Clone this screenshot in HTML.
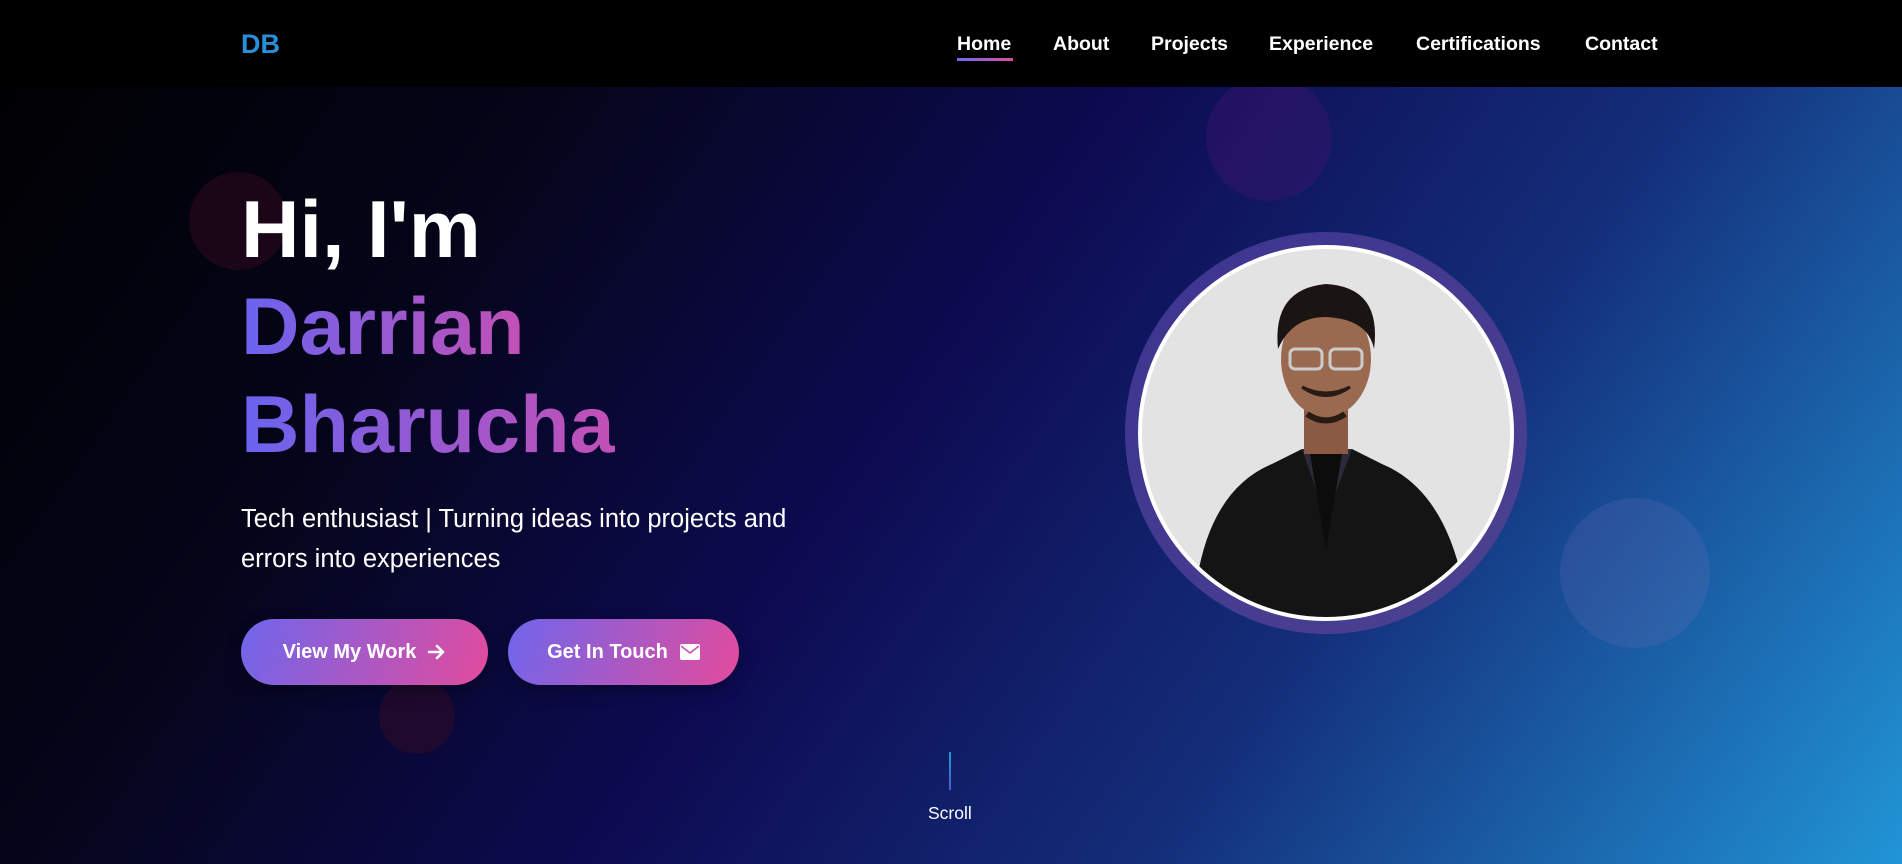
<!DOCTYPE html>
<html><head><meta charset="utf-8"><style>
*{margin:0;padding:0;box-sizing:border-box}
body{width:1902px;height:864px;overflow:hidden;font-family:"Liberation Sans",sans-serif;color:#fff;position:relative;
background:linear-gradient(125deg,#000 0%,#05051a 25%,#0d0b52 48%,#142e7a 70%,#2195d6 100%);}
nav{position:absolute;left:0;top:0;width:1902px;height:87px;background:#000}
.logo{position:absolute;left:241px;top:29px;font-size:27px;font-weight:bold;color:#2a8fd9}
.links a{position:absolute;top:33px;font-size:19.5px;font-weight:bold;color:#fff;text-decoration:none}
.ul{position:absolute;left:957px;top:58px;width:56px;height:3px;background:linear-gradient(90deg,#6d6af0,#e04b9c)}
.b{position:absolute;border-radius:50%}
h1{position:absolute;left:241px;font-size:81px;font-weight:bold;line-height:1}
.g{background:linear-gradient(90deg,#6a63ef,#c350b5);-webkit-background-clip:text;background-clip:text;color:transparent}
.sub{position:absolute;left:241px;top:499px;font-size:25.5px;line-height:40px;width:600px}
.btn{position:absolute;top:619px;height:66px;border-radius:33px;background:linear-gradient(110deg,#6f66ec,#e34b9c);font-size:20px;font-weight:bold;display:flex;align-items:center;justify-content:center;gap:12px;box-shadow:0 6px 16px rgba(0,0,0,.3)}
</style></head><body>
<div class="b" style="left:1206px;top:75px;width:126px;height:126px;background:rgba(60,20,110,.45)"></div>
<div class="b" style="left:189px;top:172px;width:98px;height:98px;background:rgba(50,10,30,.5)"></div>
<div class="b" style="left:379px;top:678px;width:76px;height:76px;background:rgba(45,12,40,.6)"></div>
<div class="b" style="left:1560px;top:498px;width:150px;height:150px;background:rgba(110,110,180,.22)"></div>
<nav><div class="logo">DB</div>
<div class="links"><a style="left:957px">Home</a><a style="left:1053px">About</a><a style="left:1151px">Projects</a><a style="left:1269px">Experience</a><a style="left:1416px">Certifications</a><a style="left:1585px">Contact</a></div>
<div class="ul"></div></nav>
<h1 style="top:190px">Hi, I'm</h1>
<h1 class="g" style="top:287px">Darrian</h1>
<h1 class="g" style="top:385px;padding-bottom:10px">Bharucha</h1>
<div class="sub">Tech enthusiast | Turning ideas into projects and errors into experiences</div>
<div class="btn" style="left:241px;width:247px">View My Work <svg width="18" height="16" viewBox="0 0 18 16"><path d="M1 8h14M9 2l6 6-6 6" stroke="#fff" stroke-width="2.6" fill="none" stroke-linecap="round" stroke-linejoin="round"/></svg></div>
<div class="btn" style="left:508px;width:231px">Get In Touch <svg width="20" height="16" viewBox="0 0 20 16"><rect width="20" height="16" rx="2" fill="#fff"/><path d="M1 2l9 7 9-7" stroke="#c850a8" stroke-width="1.5" fill="none"/></svg></div>
<div class="b" style="left:1125px;top:232px;width:402px;height:402px;background:linear-gradient(135deg,#3c3490,#4c4290)"></div>
<div class="b" style="left:1138px;top:245px;width:376px;height:376px;background:#e3e3e3;border:4px solid #fff;overflow:hidden">
<svg width="368" height="368" viewBox="0 0 368 368">
<path d="M55 330 Q70 240 130 215 L160 200 Q184 220 210 200 L240 215 Q300 240 320 330 L330 368 L40 368Z" fill="#141414"/>
<path d="M160 200 L184 270 L210 200Z" fill="#2a2a3a"/>
<path d="M168 205 L184 300 L200 205Z" fill="#0c0c0c"/>
<rect x="162" y="150" width="44" height="55" fill="#8a5a44"/>
<ellipse cx="184" cy="110" rx="45" ry="58" fill="#9a6a50"/>
<path d="M136 100 Q130 40 184 35 Q240 38 232 100 Q226 70 184 68 Q150 68 136 100Z" fill="#1a1412"/>
<rect x="148" y="100" width="32" height="20" rx="5" fill="none" stroke="#ccc" stroke-width="3"/>
<rect x="188" y="100" width="32" height="20" rx="5" fill="none" stroke="#ccc" stroke-width="3"/>
<path d="M160 138 Q184 155 208 138 Q184 150 160 138" fill="#fff" stroke="#2a1a14" stroke-width="3"/>
<path d="M165 165 Q184 178 203 165" stroke="#2a1a14" stroke-width="6" fill="none"/>
</svg></div>
<div style="position:absolute;left:949px;top:752px;width:2px;height:38px;background:linear-gradient(#1aa0c8,#4a5ad8)"></div>
<div style="position:absolute;left:928px;top:803px;font-size:17.5px">Scroll</div>
</body></html>
